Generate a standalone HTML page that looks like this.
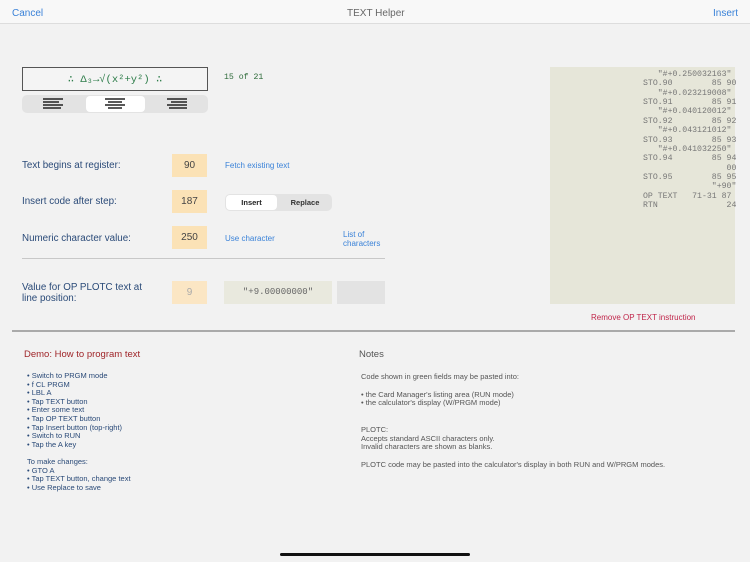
<!DOCTYPE html>
<html><head><meta charset="utf-8"><style>
*{margin:0;padding:0;box-sizing:border-box}
body{width:750px;height:562px;background:#f2f2f2;font-family:"Liberation Sans",sans-serif;position:relative;overflow:hidden}
.a{position:absolute;white-space:nowrap}
.nav{left:0;top:0;width:750px;height:24px;background:#f8f8f8;border-bottom:1px solid #ddd}
.lbl{font-size:9.8px;color:#2a4a78}
.or{background:#fbe2b6;color:#444;font-size:10px;text-align:center;line-height:23px;width:35px;height:23px}
.lnk{color:#3a82d8;font-size:8px}
.mono{font-family:"Liberation Mono",monospace}
</style></head><body>
<div class="a nav"></div>
<div class="a" style="left:12px;top:8px;font-size:10px;color:#3a82d8">Cancel</div>
<div class="a" style="left:347px;top:8px;font-size:10px;color:#666">TEXT Helper</div>
<div class="a" style="left:713px;top:8px;font-size:10px;color:#3a82d8">Insert</div>

<div class="a" style="left:22px;top:67px;width:186px;height:24px;border:1px solid #555;background:#f4f4f4;text-align:center;line-height:22px;font-size:10.5px;color:#2e7d4a" ><span class="mono">∴ Δ₃→√(x²+y²) ∴</span></div>
<div class="a" style="left:22px;top:95px;width:186px;height:18px;background:#e3e3e3;border-radius:5px"></div>
<div class="a" style="left:86px;top:96px;width:59px;height:16px;background:#fff;border-radius:4px"></div>
<svg class="a" style="left:22px;top:93px" width="186" height="22"><g stroke="#222" stroke-width="1.6">
<path d="M21 6h20M21 9h16M21 12h20M21 15h18"/>
<path d="M83 6h20M86 9h14M83 12h20M86 15h14"/>
<path d="M145 6h20M149 9h16M145 12h20M147 15h18"/></g></svg>
<div class="a mono" style="left:224px;top:73px;font-size:8.2px;color:#2e6b3a">15 of 21</div>

<div class="a lbl" style="left:22px;top:160px">Text begins at register:</div>
<div class="a or" style="left:172px;top:154px">90</div>
<div class="a lnk" style="left:225px;top:161px">Fetch existing text</div>

<div class="a lbl" style="left:22px;top:196px">Insert code after step:</div>
<div class="a or" style="left:172px;top:190px">187</div>
<div class="a" style="left:225px;top:194px;width:107px;height:17px;background:#e3e3e3;border-radius:5px"></div>
<div class="a" style="left:226px;top:195px;width:51px;height:15px;background:#fff;border-radius:4px;font-size:7.5px;font-weight:bold;text-align:center;line-height:15px;color:#222">Insert</div>
<div class="a" style="left:278px;top:195px;width:54px;font-size:7.5px;font-weight:bold;text-align:center;line-height:15px;color:#333">Replace</div>

<div class="a lbl" style="left:22px;top:233px">Numeric character value:</div>
<div class="a or" style="left:172px;top:226px">250</div>
<div class="a lnk" style="left:225px;top:234px">Use character</div>
<div class="a lnk" style="left:343px;top:230px;line-height:9px">List of<br>characters</div>
<div class="a" style="left:22px;top:258px;width:363px;height:1px;background:#c8c8c8"></div>

<div class="a lbl" style="left:22px;top:282px;line-height:11px">Value for OP PLOTC text at<br>line position:</div>
<div class="a or" style="left:172px;top:281px;color:#aaa;background:#fbe6c4">9</div>
<div class="a mono" style="left:224px;top:281px;width:108px;height:23px;background:#e9e9de;color:#666;font-size:9px;text-align:center;line-height:23px">"+9.00000000"</div>
<div class="a" style="left:337px;top:281px;width:48px;height:23px;background:#e3e3e3"></div>

<div class="a" style="left:550px;top:67px;width:185px;height:237px;background:#e6e6d9"></div>
<pre class="a mono" style="white-space:pre;left:643px;top:70px;font-size:8.2px;line-height:9.36px;color:#777">   "#+0.250032163"
STO.90        85 90
   "#+0.023219008"
STO.91        85 91
   "#+0.040120012"
STO.92        85 92
   "#+0.043121012"
STO.93        85 93
   "#+0.041032250"
STO.94        85 94
                 00
STO.95        85 95
              "+90"
OP TEXT   71-31 87
RTN              24</pre>
<div class="a" style="left:591px;top:313px;font-size:8px;color:#c0254a">Remove OP TEXT instruction</div>

<div class="a" style="left:12px;top:330px;width:723px;height:2px;background:#aaa"></div>

<div class="a" style="left:24px;top:349px;font-size:9.5px;color:#a0262a">Demo: How to program text</div>
<div class="a" style="left:27px;top:372px;font-size:7.5px;line-height:8.6px;color:#2a4a78">• Switch to PRGM mode<br>• f CL PRGM<br>• LBL A<br>• Tap TEXT button<br>• Enter some text<br>• Tap OP TEXT button<br>• Tap Insert button (top-right)<br>• Switch to RUN<br>• Tap the A key<br><br>To make changes:<br>• GTO A<br>• Tap TEXT button, change text<br>• Use Replace to save</div>

<div class="a" style="left:359px;top:349px;font-size:9.5px;color:#555">Notes</div>
<div class="a" style="left:361px;top:373px;font-size:7.5px;line-height:8.8px;color:#555">Code shown in green fields may be pasted into:<br><br>• the Card Manager's listing area (RUN mode)<br>• the calculator's display (W/PRGM mode)<br><br><br>PLOTC:<br>Accepts standard ASCII characters only.<br>Invalid characters are shown as blanks.<br><br>PLOTC code may be pasted into the calculator's display in both RUN and W/PRGM modes.</div>

<div class="a" style="left:280px;top:553px;width:190px;height:3px;border-radius:2px;background:#111"></div>
</body></html>
